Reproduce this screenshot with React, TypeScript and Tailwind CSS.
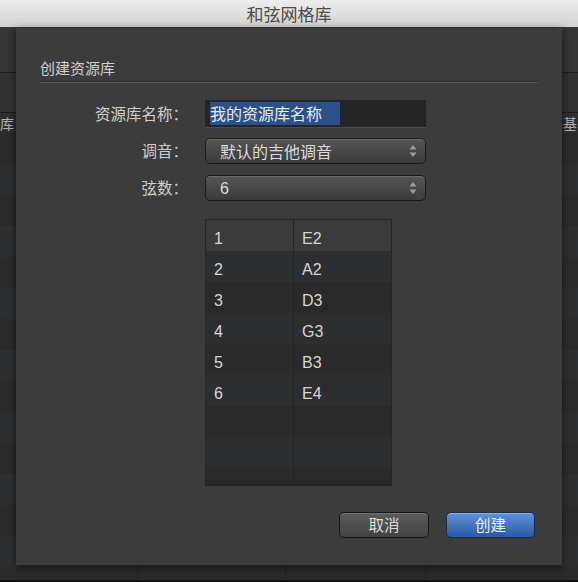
import React from "react";

const cjk = { fontFamily: '"Noto Sans CJK SC", "Noto Sans", sans-serif' };
const latin = { fontFamily: '"Liberation Sans", "Noto Sans CJK SC", sans-serif' };

function Arrows() {
  return (
    <svg width="8" height="14" viewBox="0 0 8 14" className="shrink-0">
      <path d="M4 1 L7.5 5.5 L0.5 5.5 Z" fill="#9c9c9c" />
      <path d="M4 13 L7.5 8.5 L0.5 8.5 Z" fill="#9c9c9c" />
    </svg>
  );
}

function Popup({ children, h }: { children: React.ReactNode; h: string }) {
  return (
    <div
      className={`flex w-[221px] ${h} items-center justify-between rounded-[5px] border border-[#1b1b1b] bg-gradient-to-b from-[#555555] to-[#3b3b3b] pl-[14px] pr-[8px] text-[16px] text-[#dcdcdc] shadow-[inset_0_1px_0_rgba(255,255,255,0.12)]`}
    >
      <span>{children}</span>
      <Arrows />
    </div>
  );
}

const rows: [string, string][] = [
  ["1", "E2"],
  ["2", "A2"],
  ["3", "D3"],
  ["4", "G3"],
  ["5", "B3"],
  ["6", "E4"],
  ["", ""],
  ["", ""],
  ["", ""],
];

const bgRows = Array.from({ length: 15 });

export default function App() {
  return (
    <div className="relative h-[582px] w-[578px] overflow-hidden bg-[#2a2a2a]" style={cjk}>
      {/* Title bar */}
      <div className="flex h-[28px] items-center justify-center border-b border-[#3a3a3a] bg-gradient-to-b from-[#ededed] to-[#d2d2d2] text-[17px] text-[#4b4b4b]">
        和弦网格库
      </div>
      {/* Background window content */}
      <div className="h-[45px] border-b border-[#1f1f1f] bg-[#353535]" />
      <div className="h-[39px] bg-[#323232]" />
      <div className="flex h-[21px] items-center justify-between border-t border-[#1c1c1c] bg-[#2f2f2f] text-[14px] text-[#b4b4b4]">
        <span className="leading-none">库</span>
        <span className="pr-[1px] leading-none">基</span>
      </div>
      <div className="flex flex-col">
        {bgRows.map((_, i) => (
          <div
            key={i}
            className={`flex h-[31px] ${i % 2 === 0 ? "bg-[#2b2b2b]" : "bg-[#2e2f31]"}`}
          >
            <div className="w-[138px] border-r border-[#222222]" />
            <div className="w-[148px] border-r border-[#222222]" />
            <div className="w-[140px] border-r border-[#222222]" />
            <div className="flex-1" />
          </div>
        ))}
      </div>
      <div className="absolute bottom-0 left-0 right-0 h-[2px] bg-[#111111]" />

      {/* Sheet dialog */}
      <div className="absolute left-[16px] top-[28px] flex h-[537px] w-[546px] flex-col bg-[#3c3c3c] px-[24px] pt-[30px] shadow-[0_2px_8px_rgba(0,0,0,0.6)]">
        <div className="h-[20px] text-[15px] leading-[20px] text-[#cfcfcf]">创建资源库</div>
        <div className="mt-[3px] h-[2px] w-[498px] border-t border-[#2c2c2c] bg-[#595959]" />

        <div className="mt-[17px] flex items-center">
          <div className="w-[148px] text-right text-[15.5px] text-[#cfcfcf]">资源库名称：</div>
          <div className="ml-[17px] flex h-[28px] w-[221px] items-center border-b border-[#4a4a4a] bg-[#252525] pl-[5px]">
            <span className="bg-[#2c5189] pr-[18px] text-[16px] leading-[23px] text-[#e8e8e8]">我的资源库名称</span>
          </div>
        </div>

        <div className="mt-[10px] flex items-center">
          <div className="w-[148px] text-right text-[15.5px] text-[#cfcfcf]">调音：</div>
          <div className="ml-[17px]">
            <Popup h="h-[26px]">默认的吉他调音</Popup>
          </div>
        </div>

        <div className="mt-[11px] flex items-center">
          <div className="w-[148px] text-right text-[15.5px] text-[#cfcfcf]">弦数：</div>
          <div className="ml-[17px]">
            <Popup h="h-[26px]">
              <span style={latin}>6</span>
            </Popup>
          </div>
        </div>

        {/* Table */}
        <div className="ml-[165px] mt-[18px] h-[267px] w-[187px] overflow-hidden border border-[#262626] bg-[#2a2a2a]" style={latin}>
          {rows.map(([a, b], i) => (
            <div
              key={i}
              className={`flex h-[31px] items-center text-[16px] text-[#d6d6d6] ${
                i === 0 ? "bg-[#3b3b3b]" : i % 2 === 1 ? "bg-[#2d2e2f]" : "bg-[#2a2a2a]"
              }`}
            >
              <div className="flex h-full w-[88px] items-center border-r border-[#242424] pl-[8px] pt-[6px]">{a}</div>
              <div className="flex h-full flex-1 items-center pl-[8px] pt-[6px]">{b}</div>
            </div>
          ))}
        </div>

        {/* Buttons */}
        <div className="mt-[26px] flex justify-end gap-[17px] pr-[3px]">
          <div className="flex h-[26px] w-[90px] items-center justify-center rounded-[5px] border border-[#161616] bg-gradient-to-b from-[#5c5c5c] to-[#424242] text-[15.5px] text-[#dddddd] shadow-[inset_0_1px_0_rgba(255,255,255,0.15)]">
            取消
          </div>
          <div className="flex h-[26px] w-[89px] items-center justify-center rounded-[5px] border border-[#1b2a45] bg-gradient-to-b from-[#5e92d8] to-[#2a5aa3] text-[15.5px] text-[#e6eefa] shadow-[inset_0_1px_0_rgba(255,255,255,0.3)]">
            创建
          </div>
        </div>
      </div>
    </div>
  );
}
